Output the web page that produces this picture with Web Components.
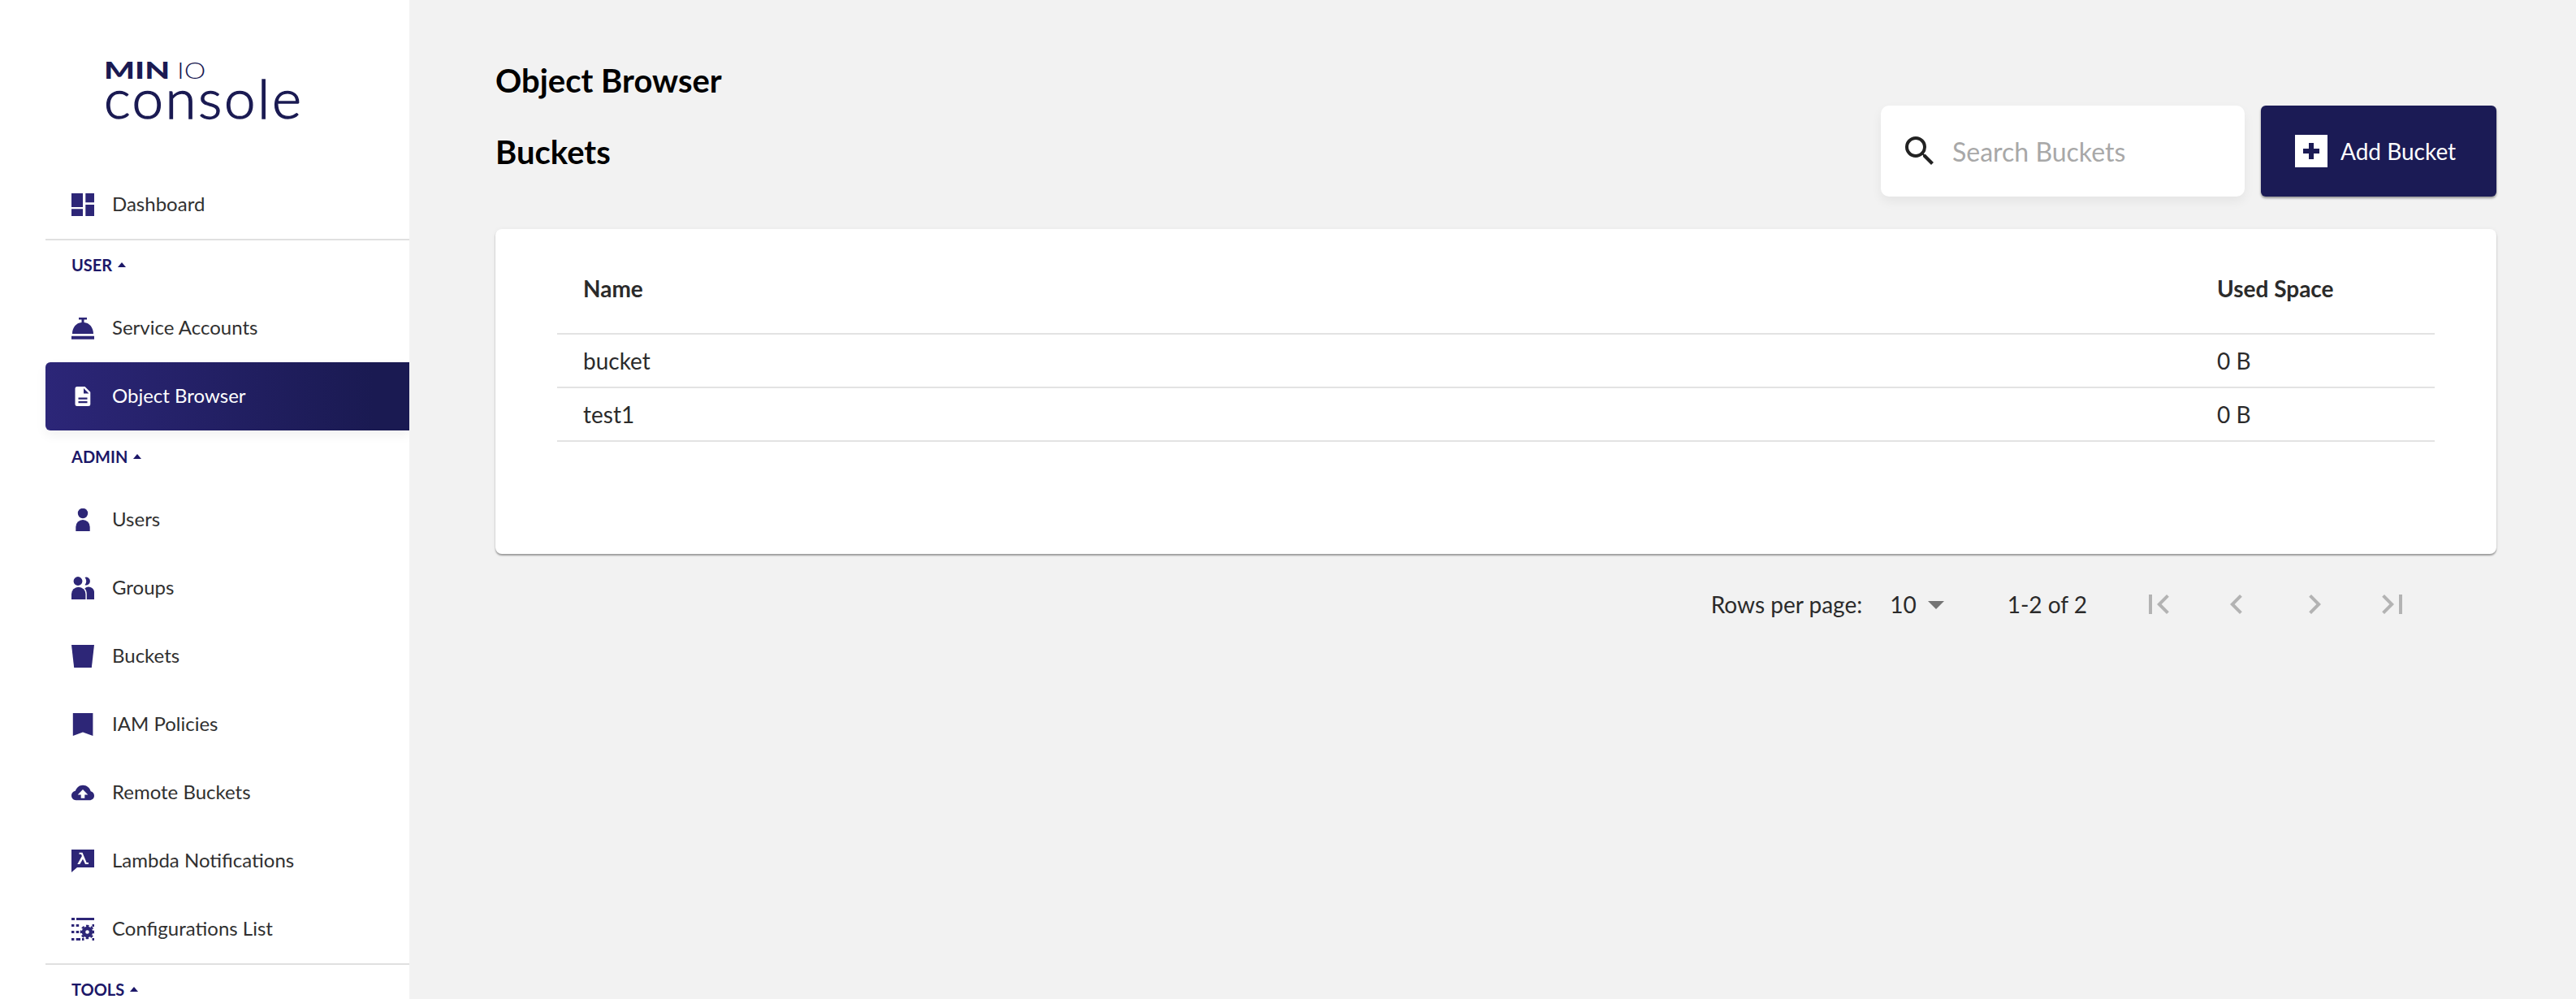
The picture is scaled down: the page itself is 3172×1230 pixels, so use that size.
<!DOCTYPE html>
<html><head><meta charset="utf-8"><title>MinIO Console</title>
<style>
html,body{margin:0;padding:0;background:#f2f2f2;font-family:Lato,"Open Sans",sans-serif;}
</style></head><body>
<mc-app>
  <mc-sidebar slot="side">
    <mc-logo></mc-logo>
    <mc-nav-item icon="dashboard">Dashboard</mc-nav-item>
    <mc-nav-section divider>USER</mc-nav-section>
    <mc-nav-item icon="bell">Service Accounts</mc-nav-item>
    <mc-nav-item icon="doc" active>Object Browser</mc-nav-item>
    <mc-nav-section>ADMIN</mc-nav-section>
    <mc-nav-item icon="user">Users</mc-nav-item>
    <mc-nav-item icon="group">Groups</mc-nav-item>
    <mc-nav-item icon="bucket">Buckets</mc-nav-item>
    <mc-nav-item icon="bookmark">IAM Policies</mc-nav-item>
    <mc-nav-item icon="cloud">Remote Buckets</mc-nav-item>
    <mc-nav-item icon="lambda">Lambda Notifications</mc-nav-item>
    <mc-nav-item icon="config">Configurations List</mc-nav-item>
    <mc-nav-section divider>TOOLS</mc-nav-section>
  </mc-sidebar>
  <mc-main>
    <mc-page-title>Object Browser</mc-page-title>
    <mc-toolbar>
      <span slot="title">Buckets</span>
      <mc-search placeholder="Search Buckets"></mc-search>
      <mc-button>Add Bucket</mc-button>
    </mc-toolbar>
    <mc-table>
      <mc-row head><span>Name</span><span>Used Space</span></mc-row>
      <mc-row><span>bucket</span><span>0 B</span></mc-row>
      <mc-row><span>test1</span><span>0 B</span></mc-row>
    </mc-table>
    <mc-pagination></mc-pagination>
  </mc-main>
</mc-app>
<script>
const ICONS={
dashboard:'<path d="M0 0h14v17H0zM0 19.300h14V28H0zM17.300 0H28v11.300H17.300zM17.300 14H28v14H17.300z"/>',
bell:'<path d="M9 1h10v2.500h-3.500V7c6.800.4 11.500 6.500 11.500 14H1C1 13.500 5.700 7.400 12.500 7V3.500H9zM0 23.700h28v4H0z"/>',
doc:'<path d="M7 2h9.500l6.800 6.800V23.500a2.500 2.500 0 0 1-2.500 2.500H7a2.500 2.500 0 0 1-2.500-2.500v-19A2.500 2.500 0 0 1 7 2zm8 2v6.500h6.500zM8.500 15.500v2.200h11v-2.200zM8.500 20v2.200h11V20z" fill-rule="evenodd"/>',
user:'<circle cx="14" cy="6" r="6.200"/><path d="M5.300 28v-5.300a8.700 8.700 0 0 1 17.400 0V28z"/>',
group:'<circle cx="8" cy="5.500" r="5.400"/><path d="M16.500 .9a4.900 4.900 0 1 1 0 9.300 7 7 0 0 0 0-9.300z"/><path d="M0 28v-6.500a8.700 8.700 0 0 1 17.400 0V28z"/><path d="M18.800 28v-6.500c0-3-.8-5.300-2.500-7.100a7 7 0 0 1 11.700 5.600V28z"/>',
bucket:'<path d="M0 0h28l-3.200 28H3.200z"/>',
bookmark:'<path d="M1.800 0h24.600v28L14 23.500 1.800 28z"/>',
cloud:'<path transform="translate(0 3.700)" d="M14 1c4.800 0 8.700 3.200 9.700 7.600 2.700.5 4.300 2.800 4.300 5.400 0 3.200-2.600 5.500-5.700 5.500H5.500C2.400 19.500 0 16.900 0 13.800c0-2.900 2.100-5.300 4.900-5.700C6.300 3.800 9.800 1 14 1zm0 5.200-6.300 6.500h4v4.300h4.600v-4.300h4z" fill-rule="evenodd"/>',
lambda:'<path d="M0 0h28v22H7L0 28zM9.500 3.700v2.100h2.400l1 2.200L7.300 18h3l3.700-6.200 3 6.200h4v-2.100h-2.400L13.500 3.700z" fill-rule="evenodd"/>',
config:'<path d="M0 0h4v3H0zM6 0h22v3H6zM0 8h3.400v3H0zM5.700 8h3.500v3H5.700zM25.500 8H28v3h-2.500zM0 16h3.400v3H0zM5.700 16h3.500v3H5.700zM0 25h3.400v3H0zM5.700 25h5.300v3H5.700zM13 25h2.500v3H13zM25.500 25H28v3h-2.500z"/><circle cx="19.500" cy="17.500" r="6.800"/><circle cx="19.500" cy="17.500" r="7.600" fill="none" stroke="#2d2677" stroke-width="2.400" stroke-dasharray="3.400 2.570" transform="rotate(-12.800 19.500 17.500)"/><circle cx="19.500" cy="17.500" r="2.300" fill="#fff"/>'
};
function def(name,css,html,extra){
  customElements.define(name,class extends HTMLElement{
    constructor(){super();const r=this.attachShadow({mode:'open'});r.innerHTML='<style>'+css+'</style>'+html;}
    connectedCallback(){extra&&extra.call(this);}
  });
}
def('mc-app',':host{display:flex;width:3172px;height:1230px;overflow:hidden;background:#f2f2f2;color:#000;font-family:Lato,"Open Sans",sans-serif}','<slot name="side"></slot><slot></slot>');
def('mc-sidebar',':host{display:block;flex:none;width:504px;height:1230px;box-sizing:border-box;padding-left:56px;background:#fff;overflow:hidden}','<slot></slot>');
def('mc-logo',`:host{display:block;height:210px;box-sizing:border-box;padding:75px 0 0 72px;color:#1a1a52;line-height:1}
.m{display:flex;height:22px;font:900 28px/22px Lato,sans-serif;white-space:nowrap}
.a{display:inline-block;width:90px;transform:scaleX(1.430);transform-origin:0 50%}
.b{display:inline-block;font-weight:300;transform:scaleX(1.200);transform-origin:0 50%}
.c{display:block;height:50px;font:300 67px/50px Lato,sans-serif;letter-spacing:2.500px;white-space:nowrap;-webkit-text-stroke:1.300px #1a1a52;transform:scaleX(1.030);transform-origin:0 0;margin-top:-2px}`,
'<div class="m"><span class="a">MIN</span><span class="b">IO</span></div><div class="c">console</div>');
def('mc-nav-item',`:host{display:flex;align-items:center;height:84px;box-sizing:border-box;padding-left:32px;font:400 24px/1 Lato,sans-serif;color:#303030}
:host([active]){background:linear-gradient(88deg,#2c2678 0%,#1a1a52 90%);color:#fff;border-radius:6px 0 0 6px;box-shadow:0 6px 14px rgba(0,0,0,.06)}
svg{flex:none;width:28px;height:28px;margin-right:22px;fill:#2d2677}
:host([active]) svg{fill:#fff}
span{padding-bottom:2px}`,'<svg viewBox="0 0 28 28"></svg><span><slot></slot></span>',function(){this.shadowRoot.querySelector('svg').innerHTML=ICONS[this.getAttribute('icon')];});
def('mc-nav-section',`:host{display:flex;align-items:center;box-sizing:border-box;height:68px;padding:0 0 7px 32px;border-top:2px solid transparent;font:700 20px/1 Lato,sans-serif;color:#1c1768}
:host([divider]){border-top-color:#e0e0e0}
i{display:inline-block;margin-left:7px;border:5px solid transparent;border-top:0;border-bottom:6px solid #1c1768;}`,'<slot></slot><i></i>');
def('mc-main',':host{display:block;flex:1;padding:0 98px 0 106px;box-sizing:border-box;min-width:0}','<slot></slot>');
def('mc-page-title',':host{display:block;padding-top:75px;height:48px;font:700 40px/48px Lato,sans-serif;color:#000;}','<slot></slot>');
def('mc-toolbar',`:host{display:flex;align-items:center;margin-top:7px;height:112px}
.t{flex:1;font:700 40px/48px Lato,sans-serif;color:#000;margin-top:1px}
.g{display:flex;gap:20px}`,'<div class="t"><slot name="title"></slot></div><div class="g"><slot></slot></div>');
def('mc-search',`:host{display:flex;align-items:center;width:448px;height:112px;box-sizing:border-box;padding-left:24px;background:#fff;border-radius:10px;box-shadow:0 6px 14px rgba(0,0,0,.06)}
svg{width:48px;height:48px;flex:none;margin-right:16px;fill:#222}
span{font:400 32px/1 Lato,sans-serif;color:#a8a8a8;padding-top:1px}`,'<svg viewBox="0 0 24 24"><path d="M15.500 14h-.79l-.28-.27A6.470 6.470 0 0 0 16 9.500 6.500 6.500 0 1 0 9.500 16c1.610 0 3.090-.59 4.230-1.570l.27.28v.79l5 4.990L20.490 19l-4.990-5zm-6 0C7.010 14 5 11.990 5 9.500S7.010 5 9.500 5 14 7.010 14 9.500 11.990 14 9.500 14z"/></svg><span></span>',function(){this.shadowRoot.querySelector('span').textContent=this.getAttribute('placeholder');});
def('mc-button',`:host{display:flex;align-items:center;width:290px;height:112px;box-sizing:border-box;padding-left:42px;background:#1b1b55;color:#fff;border-radius:6px;box-shadow:0 2px 3px rgba(0,0,0,.4);font:400 28px/1 Lato,sans-serif}
b{display:flex;align-items:center;justify-content:center;width:40px;height:40px;background:#fff;margin-right:16px}
svg{width:20px;height:20px;fill:#1b1b55}
span{padding-bottom:1px}`,'<b><svg viewBox="0 0 20 20"><path d="M7 0h6v7h7v6h-7v7H7v-7H0V7h7z"/></svg></b><span><slot></slot></span>');
def('mc-table',`:host{display:block;margin-top:40px;height:400px;box-sizing:border-box;padding:36px 76px 0;background:#fff;border-radius:8px;box-shadow:0 2px 2px rgba(0,0,0,.35),0 0 6px rgba(0,0,0,.04)}`,'<slot></slot>');
def('mc-row',`:host{display:grid;grid-template-columns:1fr 268px;align-items:center;height:66px;box-sizing:border-box;padding-left:32px;border-bottom:2px solid #e3e3e3;font:400 28px/1 Lato,sans-serif;color:#2b2b2b}
:host([head]){height:94px;font-weight:700;padding-bottom:18px}`,'<slot></slot>');
const nav=(d)=>`<svg viewBox="0 0 24 24"><path d="${d}" /></svg>`;
def('mc-pagination',`:host{display:flex;align-items:center;height:60px;margin-top:32px;justify-content:flex-end;padding-right:104px;font:400 28px/1 Lato,sans-serif;color:#2b2b2b}
.v{margin-left:34px;display:flex;align-items:center}
.v svg{width:48px;height:48px;fill:#757575}
.r{margin:0 16px 0 64px}
.n svg{width:48px;height:48px;fill:#b3b3b3;margin-left:48px;display:block}
.n{display:flex}`,`<span>Rows per page:</span><span class="v">10<svg viewBox="0 0 24 24"><path d="M7 10l5 5 5-5z"/></svg></span><span class="r">1-2 of 2</span><div class="n">${nav('M18.410 16.590L13.820 12l4.590-4.590L17 6l-6 6 6 6zM6 6h2v12H6z')}${nav('M15.410 7.410L14 6l-6 6 6 6 1.410-1.410L10.830 12z')}${nav('M10 6L8.590 7.410 13.170 12l-4.580 4.590L10 18l6-6z')}${nav('M5.590 7.410L10.180 12l-4.590 4.590L7 18l6-6-6-6zM16 6h2v12h-2z')}</div>`);
</script>
</body></html>
